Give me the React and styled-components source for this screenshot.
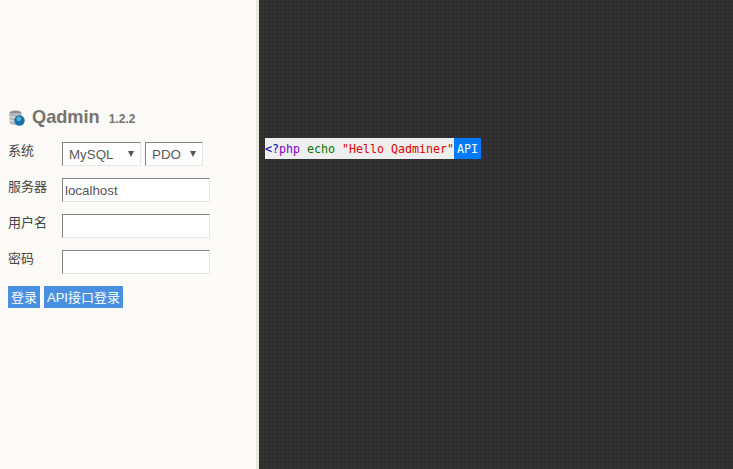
import styled, { createGlobalStyle } from 'styled-components';

const Global = createGlobalStyle`
  html, body {
    margin: 0;
    height: 100%;
    overflow: hidden;
  }
  #root {
    height: 100%;
  }
  body {
    font-family: "Liberation Sans", "Noto Sans CJK SC", sans-serif;
    font-size: 13px;
    color: #333;
  }
`;

const Page = styled.div`
  display: flex;
  height: 469px;
`;

const Sidebar = styled.aside`
  box-sizing: border-box;
  width: 259px;
  flex: none;
  padding: 107px 0 0 8px;
  background-color: #fbfaf6;
  border-right: 3px solid #e8e6e0;
`;

const Brand = styled.div`
  display: flex;
  align-items: baseline;
  height: 22px;
`;

const Logo = styled.svg`
  width: 16px;
  height: 16px;
  margin: 0 7px 0 1px;
  align-self: center;
`;

const BrandName = styled.span`
  font-size: 18.2px;
  font-weight: bold;
  color: #77736e;
`;

const Version = styled.span`
  margin-left: 9px;
  font-size: 12px;
  font-weight: bold;
  color: #77736e;
`;

const Form = styled.form`
  display: flex;
  flex-direction: column;
  gap: 12px;
  margin: 13px 0 0;
`;

const Row = styled.div`
  display: flex;
  align-items: flex-start;
`;

const Label = styled.label`
  width: 54px;
  line-height: 18px;
  font-size: 13px;
  color: #444;
`;

const Field = styled.input`
  box-sizing: border-box;
  width: 148px;
  height: 24px;
  padding: 0 2px;
  background: #fff;
  border: 1px solid;
  border-color: #848484 #e6e6e6 #e6e6e6 #848484;
  border-radius: 0;
  font: 13.33px "Liberation Sans", sans-serif;
  color: #555;
`;

const SelectBox = styled.div`
  position: relative;
  box-sizing: border-box;
  display: flex;
  align-items: center;
  width: ${(p) => p.$width}px;
  height: 24px;
  margin-right: 4px;
  padding-left: 6px;
  background: #fff;
  border: 1px solid;
  border-color: #848484 #e6e6e6 #e6e6e6 #848484;
  font-size: 13.33px;
  color: #5a5a5a;
`;

const Arrow = styled.span`
  position: absolute;
  right: 6px;
  top: 8px;
  width: 0;
  height: 0;
  border-left: 3.5px solid transparent;
  border-right: 3.5px solid transparent;
  border-top: 6px solid #555;
`;

const Actions = styled.div`
  display: flex;
  gap: 4px;
`;

const Button = styled.button`
  height: 22px;
  padding: 0 3px 1px;
  background: #4a90e2;
  border: none;
  font: 13px "Liberation Sans", "Noto Sans CJK SC", sans-serif;
  color: #fff;
`;

const Main = styled.main`
  flex: 1;
  padding: 138px 0 0 6px;
  background-color: #303030;
  background-image:
    radial-gradient(rgba(0, 0, 0, 0.08) 0.7px, transparent 0.8px),
    radial-gradient(rgba(255, 255, 255, 0.02) 0.7px, transparent 0.8px);
  background-size: 4px 4px, 4px 4px;
  background-position: 0 0, 2px 2px;
`;

const Snippet = styled.div`
  display: flex;
  height: 21px;
  line-height: 22px;
  font-family: "DejaVu Sans Mono", monospace;
  font-size: 11.63px;
`;

const Code = styled.code`
  background: #eeeeee;
  font: inherit;
`;

const Token = styled.span`
  color: ${(p) => p.$color};
`;

const ApiTag = styled.span`
  padding: 0 3px;
  background: #007bff;
  color: #fff;
`;

const App = () => (
  <>
    <Global />
    <Page>
      <Sidebar>
        <Brand>
          <Logo viewBox="0 0 16 16">
            <ellipse cx="6.5" cy="3" rx="6" ry="2.5" fill="#8d9092" />
            <path d="M0.5 3v9.5c0 1.4 2.7 2.5 6 2.5s6-1.1 6-2.5V3z" fill="#b4b7b8" />
            <path d="M1 6.5c2 1.4 9 1.4 11 0M1 10c2 1.4 9 1.4 11 0" stroke="#eeeeee" fill="none" />
            <circle cx="10.5" cy="10.5" r="5.2" fill="#1a70a8" />
            <circle cx="9.8" cy="8.8" r="2.4" fill="#4fb0dc" />
          </Logo>
          <BrandName>Qadmin</BrandName>
          <Version>1.2.2</Version>
        </Brand>
        <Form>
          <Row>
            <Label>系统</Label>
            <SelectBox $width={79}>
              MySQL
              <Arrow />
            </SelectBox>
            <SelectBox $width={58}>
              PDO
              <Arrow />
            </SelectBox>
          </Row>
          <Row>
            <Label>服务器</Label>
            <Field defaultValue="localhost" />
          </Row>
          <Row>
            <Label>用户名</Label>
            <Field />
          </Row>
          <Row>
            <Label>密码</Label>
            <Field />
          </Row>
          <Actions>
            <Button type="button">登录</Button>
            <Button type="button">API接口登录</Button>
          </Actions>
        </Form>
      </Sidebar>
      <Main>
        <Snippet>
          <Code>
            <Token $color="#0000bb">&lt;?</Token>
            <Token $color="#7a00cc">php</Token>{' '}
            <Token $color="#007700">echo</Token>{' '}
            <Token $color="#dd0000">"Hello Qadminer"</Token>
          </Code>
          <ApiTag>API</ApiTag>
        </Snippet>
      </Main>
    </Page>
  </>
);

export default App;
